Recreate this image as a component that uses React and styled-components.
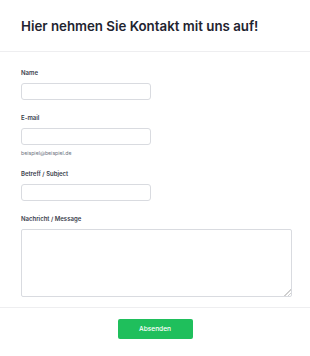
import styled, { createGlobalStyle } from "styled-components";

const GlobalStyle = createGlobalStyle`
  html, body {
    margin: 0;
    padding: 0;
    background: #fff;
  }
  body {
    font-family: Inter, "Liberation Sans", sans-serif;
    color: #1f2937;
  }
`;

const Page = styled.div`
  width: 310px;
  height: 356px;
  display: flex;
  flex-direction: column;
  background: #fff;
`;

const Header = styled.header`
  padding: 17px 21px 16px;
  border-bottom: 1px solid #eeeef0;
  h1 {
    margin: 0;
    font-size: 13.3px;
    line-height: 18px;
    font-weight: 600;
    color: #1f2430;
    white-space: nowrap;
  }
`;

const Form = styled.form`
  display: flex;
  flex-direction: column;
  gap: 14px;
  padding: 17px 18px 10px 21px;
  border-bottom: 1px solid #eeeef0;
`;

const Field = styled.div`
  display: flex;
  flex-direction: column;
  gap: 6px;
`;

const Label = styled.label`
  font-size: 6px;
  line-height: 8px;
  font-weight: 600;
  color: #3a404c;
`;

const Input = styled.input`
  box-sizing: border-box;
  width: 130px;
  height: 17px;
  border: 1px solid #d9dbe0;
  border-radius: 3px;
  padding: 0 5px;
  font-family: inherit;
  font-size: 7px;
  background: #fff;
  outline: none;
`;

const TextArea = styled.textarea`
  box-sizing: border-box;
  width: 271px;
  height: 68px;
  border: 1px solid #d9dbe0;
  border-radius: 2px;
  padding: 4px 5px;
  font-family: inherit;
  font-size: 7px;
  background: #fff;
  outline: none;
  display: block;
  &::-webkit-resizer {
    background:
      linear-gradient(135deg, transparent 76%, #cfcfcf 76%, #cfcfcf 81%, transparent 81%, transparent 88%, #cfcfcf 88%, #cfcfcf 93%, transparent 93%);
  }
`;

const Hint = styled.span`
  font-size: 5.2px;
  line-height: 6px;
  color: #6b7280;
  margin-top: -1px;
`;

const Footer = styled.div`
  display: flex;
  justify-content: center;
  padding: 11px 0 0;
`;

const SubmitButton = styled.button`
  width: 75px;
  height: 20px;
  border: none;
  border-radius: 2px;
  background: #1fbf5c;
  color: #fff;
  font-family: inherit;
  font-size: 6.6px;
  font-weight: 500;
  cursor: pointer;
`;

export default function App() {
  return (
    <>
      <GlobalStyle />
      <Page>
        <Header>
          <h1>Hier nehmen Sie Kontakt mit uns auf!</h1>
        </Header>
        <Form onSubmit={(e) => e.preventDefault()}>
          <Field>
            <Label htmlFor="name">Name</Label>
            <Input id="name" type="text" />
          </Field>
          <Field>
            <Label htmlFor="email">E-mail</Label>
            <Input id="email" type="email" />
            <Hint>beispiel@beispiel.de</Hint>
          </Field>
          <Field>
            <Label htmlFor="subject">Betreff / Subject</Label>
            <Input id="subject" type="text" />
          </Field>
          <Field>
            <Label htmlFor="message">Nachricht / Message</Label>
            <TextArea id="message" />
          </Field>
        </Form>
        <Footer>
          <SubmitButton type="button">Absenden</SubmitButton>
        </Footer>
      </Page>
    </>
  );
}
